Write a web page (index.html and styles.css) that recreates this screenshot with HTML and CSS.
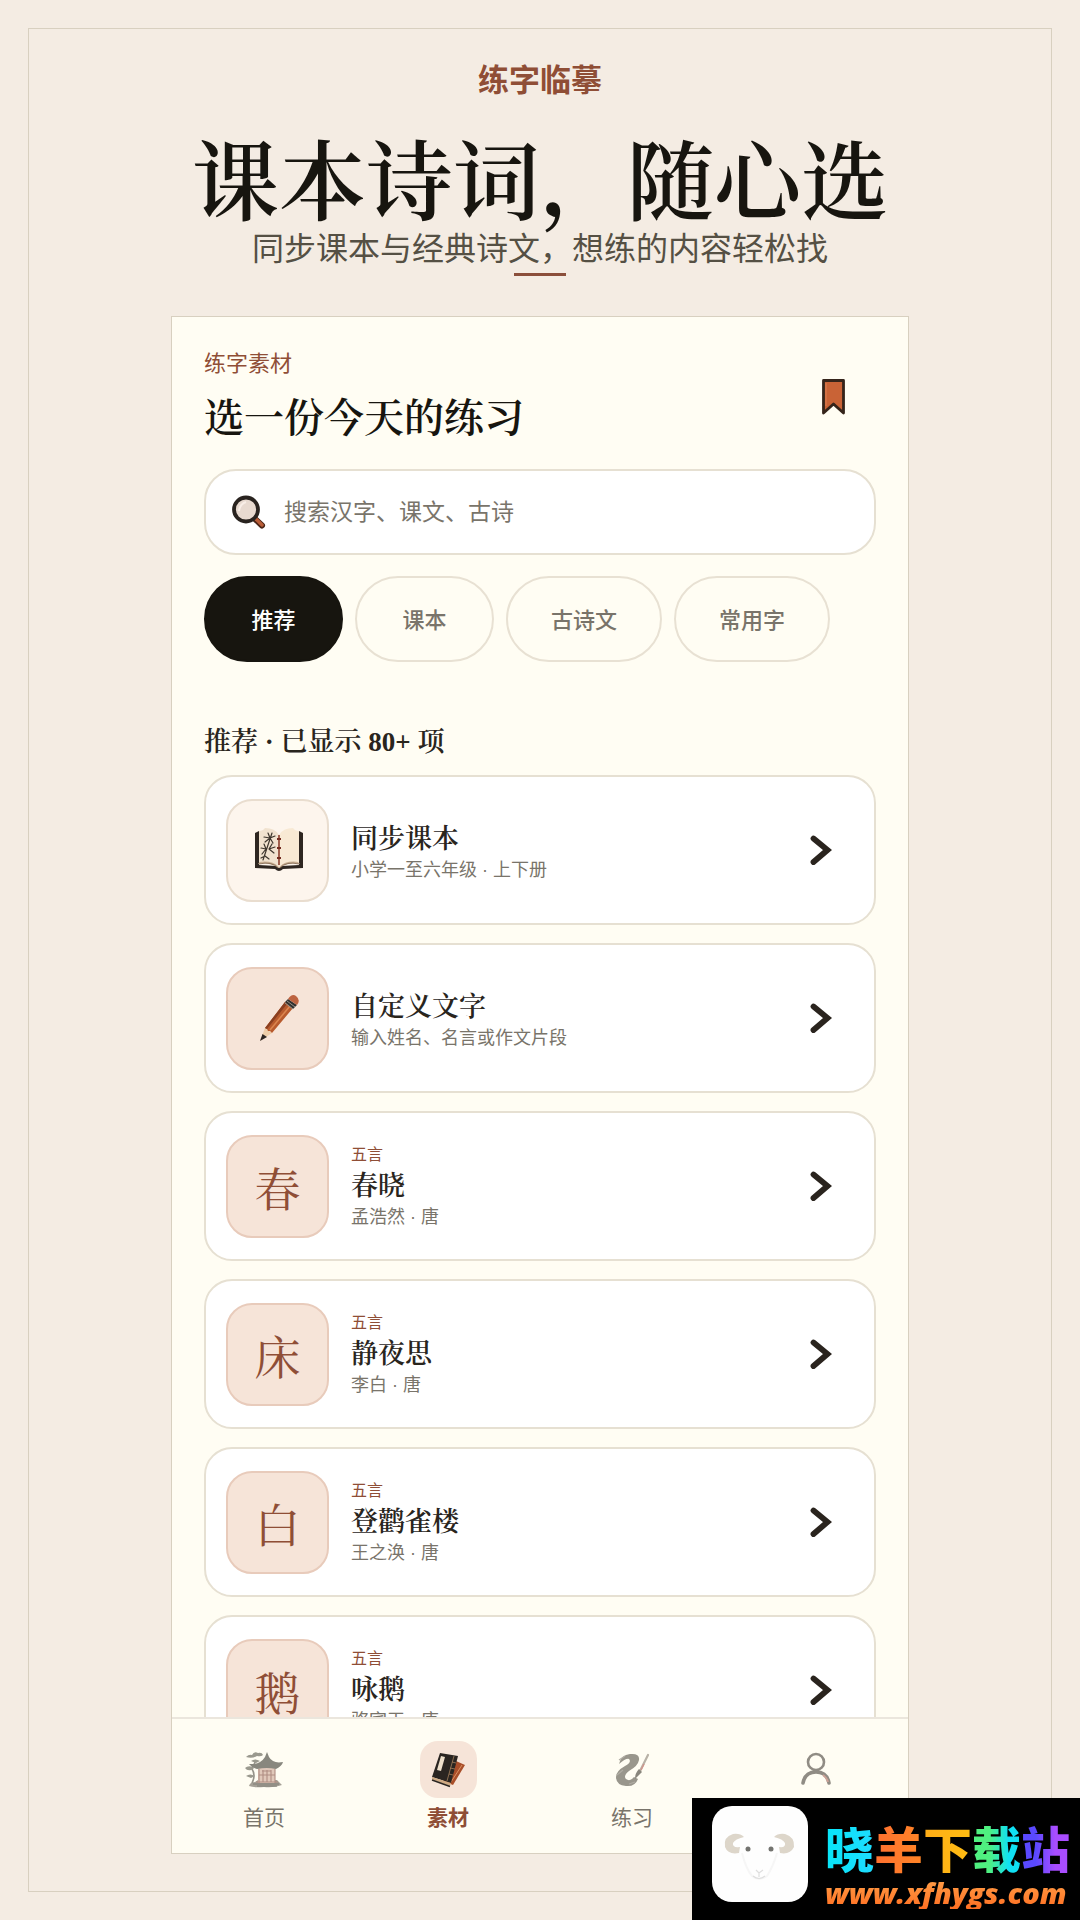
FILE: index.html
```html
<!DOCTYPE html>
<html lang="zh-CN">
<head>
  <meta charset="UTF-8" />
  <meta name="viewport" content="width=device-width, initial-scale=1.0" />
  <title>练字临摹</title>
  <link rel="stylesheet" href="styles.css">
</head>
<body>
  <svg class="sprite" aria-hidden="true">
    <symbol id="chevron" viewBox="0 0 24 32">
      <path d="M4.500 4.500 L18.500 16 L4.500 28" fill="none" stroke="#2a241e" stroke-width="5.800" stroke-linecap="round" stroke-linejoin="miter"/>
    </symbol>
  </svg>

  <div class="poster">
    <div class="frame">
      <header class="intro">
        <p class="brand">练字临摹</p>
        <h1>课本诗词，随心选</h1>
        <p class="slogan">同步课本与经典诗文，想练的内容轻松找</p>
        <div class="dash"></div>
      </header>

      <main class="phone">
        <div class="screen">
          <div class="top">
            <div>
              <p class="eyebrow">练字素材</p>
              <h2>选一份今天的练习</h2>
            </div>
            <button class="bookmark" aria-label="收藏">
              <svg width="24" height="38" viewBox="0 0 24 38">
                <path d="M1.500 3.500 H21.500 V36 L11.500 27 L1.500 36 Z" fill="#c96336" stroke="#35241a" stroke-width="2.800" stroke-linejoin="round"/>
                <path d="M4 6 V29" stroke="#dd8052" stroke-width="1"/>
              </svg>
            </button>
          </div>

          <label class="search">
            <svg width="34" height="34" viewBox="0 0 34 34">
              <path d="M22 23 L30 30.500" stroke="#4a2517" stroke-width="6" stroke-linecap="round"/>
              <path d="M24 24 L30 30" stroke="#b95d38" stroke-width="3.400" stroke-linecap="round"/>
              <circle cx="14" cy="14.500" r="12" fill="#e8dad0" stroke="#29231f" stroke-width="3.800"/>
              <path d="M7 16 Q8 9 14 7" fill="none" stroke="#f8eee7" stroke-width="2"/>
            </svg>
            <input type="search" placeholder="搜索汉字、课文、古诗" aria-label="搜索">
          </label>

          <div class="tabs">
            <button class="active">推荐</button>
            <button>课本</button>
            <button>古诗文</button>
            <button>常用字</button>
          </div>

          <h3>推荐 · 已显示 80+ 项</h3>

          <div class="list">
            <a class="item" href="#textbook">
              <span class="tile light">
                <svg width="50" height="46" viewBox="0 0 50 46">
                  <path d="M2 6 L6 4 V38 L23 39 L26 41 L29 39 L46 38 V4 L50 6 V41 L30 42 Q26 46 22 42 L2 41 Z" fill="#2e2621"/>
                  <path d="M5 37 L8 33 Q20 32 26 40 Q33 32 43 33 L47 37 Q34 35 26 41 Q17 35 5 37Z" fill="#c8ae91"/>
                  <path d="M6 4 Q10 4 12 1 Q22 1 26 8 V40 Q19 33 6 35 Z" fill="#f1e2cf"/>
                  <path d="M46 4 Q42 4 40 1 Q30 1 26 8 V40 Q33 33 46 35 Z" fill="#f8e9d4"/>
                  <path d="M6 37 Q19 34 25 41 M46 37 Q33 34 27 41" fill="none" stroke="#7d6450" stroke-width=".8"/>
                  <path d="M26 8 V38" stroke="#8c3f2d" stroke-width="1.600"/>
                  <path d="M24 12 H28 M24 21 H28 M24 31 H28" stroke="#742d22" stroke-width="2"/>
                  <path d="M19 6 L14 21 L10 33 M17 11 L11 10 M17 11 L12 15 M17 11 L22 9 M17 11 L20 16 M17 11 L15 6 M13 22 L8 21 M13 22 L9 27 M13 22 L11 17 M16 22 L22 20 M16 22 L21 26 M16 22 L19 17 M12 29 L8 31 M12 29 L16 32" fill="none" stroke="#3d352d" stroke-width="1.200" stroke-linecap="round"/>
                </svg>
              </span>
              <span class="info">
                <strong>同步课本</strong>
                <small>小学一至六年级 · 上下册</small>
              </span>
              <svg class="arrow" width="24" height="32"><use href="#chevron"/></svg>
            </a>

            <a class="item" href="#custom">
              <span class="tile">
                <svg width="42" height="48" viewBox="0 0 42 48">
                  <path d="M3 47 L8 34 L15 39 Z" fill="#edceaa"/>
                  <path d="M3 47 L5.500 40 L10 43 Z" fill="#2b2522"/>
                  <path d="M8 34 L28 8 L36 14 L15 39 L13 37 L11 37 L10 35 Z" fill="#b85a2d"/>
                  <path d="M8 34 L28 8 L30 10 L10 35Z" fill="#8a3f20"/>
                  <path d="M13 36 L33 12" stroke="#db854f" stroke-width="1.600"/>
                  <path d="M28 8 L31 5 L40 11 L36 15 Z" fill="#30302e"/>
                  <path d="M30 7 L38 13 M28 9 L36 15" stroke="#98938a" stroke-width="1"/>
                  <path d="M31 5 Q35 -1 39 2 Q44 6 40 11 Z" fill="#bd6340"/>
                </svg>
              </span>
              <span class="info">
                <strong>自定义文字</strong>
                <small>输入姓名、名言或作文片段</small>
              </span>
              <svg class="arrow" width="24" height="32"><use href="#chevron"/></svg>
            </a>

            <a class="item" href="#chunxiao">
              <span class="tile">春</span>
              <span class="info">
                <em>五言</em>
                <strong>春晓</strong>
                <small>孟浩然 · 唐</small>
              </span>
              <svg class="arrow" width="24" height="32"><use href="#chevron"/></svg>
            </a>

            <a class="item" href="#jingyesi">
              <span class="tile">床</span>
              <span class="info">
                <em>五言</em>
                <strong>静夜思</strong>
                <small>李白 · 唐</small>
              </span>
              <svg class="arrow" width="24" height="32"><use href="#chevron"/></svg>
            </a>

            <a class="item" href="#guanquelou">
              <span class="tile">白</span>
              <span class="info">
                <em>五言</em>
                <strong>登鹳雀楼</strong>
                <small>王之涣 · 唐</small>
              </span>
              <svg class="arrow" width="24" height="32"><use href="#chevron"/></svg>
            </a>

            <a class="item" href="#yonge">
              <span class="tile">鹅</span>
              <span class="info">
                <em>五言</em>
                <strong>咏鹅</strong>
                <small>骆宾王 · 唐</small>
              </span>
              <svg class="arrow" width="24" height="32"><use href="#chevron"/></svg>
            </a>
          </div>
        </div>

        <nav class="tabbar">
          <a href="#home">
            <span class="nav-icon">
              <svg width="40" height="38" viewBox="0 0 40 38">
                <path d="M5 35 Q6 31 11 31 L14 29 H33 L38 34 Q30 37 20 36 Q10 37 5 35Z" fill="#a5a096"/>
                <path d="M8 32 Q12 24 8 18 L12 9" fill="none" stroke="#96938a" stroke-width="1.600"/>
                <path d="M2 6 Q5 3 8 4 Q10 0 14 2 Q18 1 19 4 Q17 6 13 5 Q8 8 2 6Z M7 10 Q11 7 16 10 L12 12Z M1 17 Q4 14 9 16 Q11 18 7 19 Q3 20 1 17Z M2 25 Q6 22 11 25 L7 27Z" fill="#9a998e"/>
                <path d="M14 17 H31 V32 H14Z" fill="#e0c8ba"/>
                <path d="M15 18 V32 M19 19 V31 M23 19 V31 M27 19 V31 M31 18 V32 M15 24 H31 M12 31 H34 M18 20 H27" stroke="#b08d82" stroke-width="1.100"/>
                <path d="M23 1 L25 6 Q29 13 39 11 Q38 15 32 18 Q23 16 13 18 Q8 17 5 13 Q16 14 21 6Z" fill="#88877e"/>
                <path d="M9 33 H35 M13 35 H33" stroke="#807e76" stroke-width="1"/>
              </svg>
            </span>
            首页
          </a>
          <a class="active" href="#material">
            <span class="nav-icon">
              <svg width="36" height="36" viewBox="0 0 36 36">
                <path d="M26 9 L35 13 L23 33 L13 29Z" fill="#a94e29"/>
                <path d="M32 13 L21 30" stroke="#da9062" stroke-width="1"/>
                <path d="M10 1 L28 4 L21 31 L2 25Z" fill="#2a2521"/>
                <path d="M2 25 L21 31 L20 34 L2 27.500Z" fill="#cfab84"/>
                <path d="M2 28 L20 34.500" stroke="#2a2521" stroke-width="1.400"/>
                <path d="M11 4 L15 5 L11 19 L7 18Z" fill="#eee0cc"/>
                <path d="M24 4 L17 29 M22 10 L26 11 M20 16 L25 17 M19 22 L23 23" stroke="#a5805d" stroke-width=".8"/>
              </svg>
            </span>
            素材
          </a>
          <a href="#practice">
            <span class="nav-icon">
              <svg width="38" height="36" viewBox="0 0 36 36">
                <path d="M5 12 Q7 3 16 2 Q26 1 25 8 Q24 14 15 19 Q9 24 12 27 Q16 30 20 25 L24 27 Q21 35 12 34 Q2 33 2 25 Q2 19 11 14 Q18 10 15 7 Q12 6 5 12Z" fill="#99968c"/>
                <path d="M5 8 L11 4 M3 23 L9 18 M15 32 L21 30" stroke="#b1ada4" stroke-width="1.200"/>
                <path d="M34 3 L26 19" stroke="#b8b2a6" stroke-width="2.200" stroke-linecap="round"/>
                <path d="M30 12 L27 18" stroke="#cf958c" stroke-width="1.600"/>
                <path d="M25 17 L28 20 L21 27 Q21 21 25 17Z" fill="#89867d"/>
              </svg>
            </span>
            练习
          </a>
          <a href="#mine">
            <span class="nav-icon">
              <svg width="32" height="36" viewBox="0 0 32 36">
                <circle cx="16" cy="10" r="8" fill="none" stroke="#908c84" stroke-width="2.600"/>
                <path d="M3 31 Q5 20 16 20 Q27 20 29 31" fill="none" stroke="#908c84" stroke-width="3.600" stroke-linecap="round"/>
                <path d="M23 23 Q27 26 28 30" fill="none" stroke="#cba196" stroke-width="2"/>
              </svg>
            </span>
            我的
          </a>
        </nav>
      </main>
    </div>
  </div>

  <aside class="site-badge">
    <svg width="98" height="98" viewBox="0 0 98 98">
      <rect x="1" y="1" width="96" height="96" rx="20" fill="#fefefe"/>
      <path d="M33 32 Q29 28 22 29 Q12 32 14 42 Q17 50 28 48 L29 42 Q21 43 22 38 Q24 34 33 32Z" fill="#ddd6ca"/>
      <path d="M63 32 Q67 28 74 29 Q84 32 83 42 Q79 50 69 48 L68 42 Q75 43 74 38 Q72 34 63 32Z" fill="#ddd6ca"/>
      <path d="M31 48 Q35 64 41 71 Q48 77 56 71 Q62 62 66 48" fill="none" stroke="#f6f6f6" stroke-width="2"/>
      <circle cx="37" cy="44" r="2.500" fill="#73736f"/>
      <circle cx="60" cy="44" r="2.500" fill="#73736f"/>
      <path d="M45 65 L48 68 L52 65 M48 68 V72 M42 71 Q48 76 54 71" fill="none" stroke="#dedede" stroke-width="1.200"/>
    </svg>
    <div class="badge-text">
      <div class="site-name"><span class="c1">晓</span><span class="c2">羊</span><span class="c3">下</span><span class="c4">载</span><span class="c5">站</span></div>
      <div class="site-url">www.xfhygs.com</div>
    </div>
  </aside>
</body>
</html>
```
FILE: styles.css
```css
* {
  box-sizing: border-box;
}
body {
  margin: 0;
  font-family: "Liberation Sans", "Noto Sans CJK SC", sans-serif;
  background: #f4ece3;
  color: #17150f;
}
h1, h2, h3, p {
  margin: 0;
}
h1, h2, h3, .tile, .info strong {
  font-family: "Liberation Serif", "Noto Serif CJK SC", "Noto Sans CJK SC", serif;
}
button {
  font-family: inherit;
  cursor: pointer;
}
a {
  color: inherit;
  text-decoration: none;
}
.sprite {
  display: none;
}
.poster {
  height: 100vh;
  padding: 28px;
}
.frame {
  height: 100%;
  display: flex;
  flex-direction: column;
  align-items: center;
  padding: 32px 0 37px;
  border: 1px solid #d8d0c0;
}

/* heading above the phone */
.intro {
  display: flex;
  flex-direction: column;
  align-items: center;
  text-align: center;
}
.brand {
  color: #8f4e36;
  font-size: 31px;
  font-weight: 600;
  line-height: 40px;
}
h1 {
  margin-top: 38px;
  font-size: 87px;
  font-weight: 600;
  line-height: 92px;
}
.slogan {
  color: #555044;
  font-size: 32px;
  line-height: 36px;
}
.dash {
  width: 52px;
  height: 3px;
  margin-top: 6px;
  background: #8b4f3b;
}

/* phone */
.phone {
  flex: 1;
  min-height: 0;
  width: 72.2%;
  margin-top: 40px;
  display: flex;
  flex-direction: column;
  background: #fffdf3;
  border: 1px solid #d8d0c0;
}
.screen {
  flex: 1;
  min-height: 0;
  overflow: hidden;
  padding: 30px 32px 0;
}
.top {
  display: flex;
  justify-content: space-between;
  align-items: center;
}
.eyebrow {
  color: #8f4e36;
  font-size: 22px;
  line-height: 34px;
}
h2 {
  margin-top: 10px;
  font-size: 40px;
  font-weight: 600;
  line-height: 56px;
}
.bookmark {
  width: 84px;
  height: 84px;
  padding: 0;
  border: none;
  background: none;
}
.search {
  display: flex;
  align-items: center;
  gap: 18px;
  height: 86px;
  margin-top: 22px;
  padding: 0 26px;
  background: white;
  border: 2px solid #e6e0d2;
  border-radius: 32px;
}
.search input {
  flex: 1;
  min-width: 0;
  padding: 0;
  border: none;
  outline: none;
  background: none;
  font-family: inherit;
  font-size: 23px;
}
.search input::placeholder {
  color: #79746a;
  opacity: 1;
}
.tabs {
  display: flex;
  gap: 12px;
  margin-top: 21px;
}
.tabs button {
  min-width: 139px;
  height: 86px;
  padding: 0 43px 3px;
  border: 2px solid #e8e1d3;
  border-radius: 43px;
  background: none;
  color: #79746a;
  font-size: 22px;
  font-weight: 500;
}
.tabs button.active {
  background: #17150f;
  border-color: #17150f;
  color: white;
}
h3 {
  margin-top: 61px;
  color: #29251d;
  font-size: 27px;
  font-weight: 600;
  line-height: 38px;
}
.list {
  display: flex;
  flex-direction: column;
  gap: 18px;
  margin-top: 14px;
}
.item {
  display: flex;
  align-items: center;
  gap: 22px;
  height: 150px;
  padding: 0 41px 0 20px;
  background: white;
  border: 2px solid #e6e0d2;
  border-radius: 28px;
}
.tile {
  display: flex;
  align-items: center;
  justify-content: center;
  width: 103px;
  height: 103px;
  background: #f6e4d8;
  border: 2px solid #e8cbbb;
  border-radius: 26px;
  color: #8f4e36;
  font-size: 46px;
}
.tile.light {
  background: #fdf5ed;
  border-color: #e9ddcf;
}
.info {
  flex: 1;
  display: flex;
  flex-direction: column;
}
.info em {
  color: #8f4e36;
  font-size: 16px;
  font-style: normal;
  line-height: 22px;
}
.info strong {
  color: #29251d;
  font-size: 27px;
  font-weight: 600;
  line-height: 40px;
}
.info small {
  color: #79746a;
  font-size: 18px;
  line-height: 22px;
}

/* bottom navigation */
.tabbar {
  display: flex;
  padding: 22px 0 20px;
  border-top: 2px solid #ebe6dd;
}
.tabbar a {
  flex: 1;
  display: flex;
  flex-direction: column;
  align-items: center;
  gap: 5px;
  color: #79746a;
  font-size: 21px;
  line-height: 30px;
}
.tabbar .active {
  color: #8f4e36;
  font-weight: 600;
}
.nav-icon {
  display: flex;
  align-items: center;
  justify-content: center;
  width: 57px;
  height: 57px;
  border-radius: 18px;
}
.active .nav-icon {
  background: #f6e4d8;
}

/* download site badge over the corner */
.site-badge {
  position: fixed;
  right: 0;
  bottom: 0;
  display: flex;
  align-items: flex-start;
  gap: 16px;
  height: 122px;
  padding: 7px 10px 0 19px;
  background: black;
}
.badge-text {
  padding-top: 20px;
}
.site-name {
  display: flex;
  font-size: 49px;
  font-weight: 900;
  line-height: 52px;
}
.site-name span, .site-url {
  background-clip: text;
  -webkit-background-clip: text;
  color: transparent;
}
.c1 { background-image: linear-gradient(90deg, #08e5f8, #1edcff); }
.c2 { background-image: linear-gradient(90deg, #ff7030, #ff8526); }
.c3 { background-image: linear-gradient(90deg, #ffad18, #ffbd12); }
.c4 { background-image: linear-gradient(90deg, #4ff080 35%, #10e0f4 75%); }
.c5 { background-image: linear-gradient(90deg, #5a49ff 30%, #a94dff 70%); }
.site-url {
  background-image: linear-gradient(180deg, #ffa24a, #ff6f22);
  font-family: "Open Sans", sans-serif;
  font-size: 29px;
  font-style: italic;
  font-weight: 800;
  line-height: 32px;
}
```
